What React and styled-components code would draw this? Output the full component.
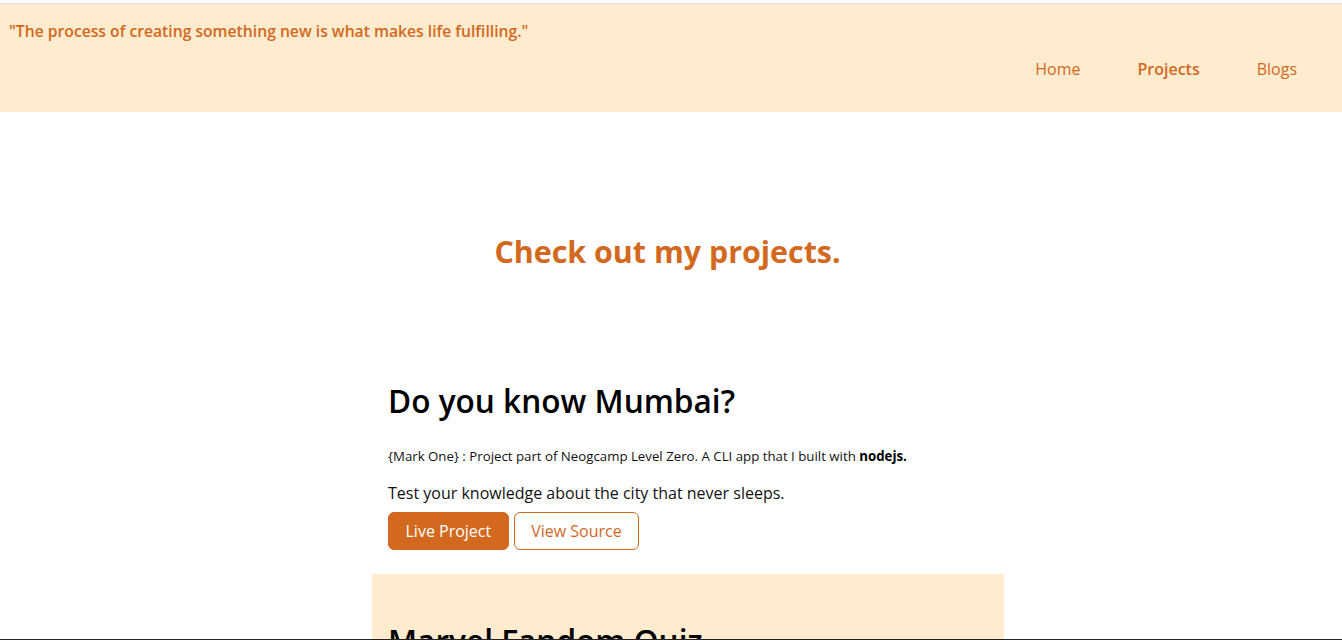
import React from "react";
import styled, { createGlobalStyle } from "styled-components";

const Global = createGlobalStyle`
  html, body { margin: 0; padding: 0; background: #fff; }
  body {
    font-family: "Open Sans", "Noto Sans", sans-serif;
    color: #000;
    border-top: 3px solid #fff;
  }
  * { box-sizing: border-box; }
`;

const accent = "#d2691e";
const cream = "#ffebcd";

const Header = styled.header`
  background: ${cream};
  border-top: 1px solid #d9d9d9;
  padding: 15px 0 31px;
  display: flex;
  flex-direction: column;
`;

const Quote = styled.p`
  margin: 0;
  padding-left: 9px;
  font-size: 15.7px;
  line-height: 24px;
  font-weight: 600;
  color: ${accent};
`;

const Nav = styled.nav`
  margin-top: 14px;
  display: flex;
  justify-content: flex-end;
  gap: 57px;
  padding-right: 45px;
`;

const NavLink = styled.a`
  font-size: 16px;
  line-height: 24px;
  color: ${accent};
  text-decoration: none;
  font-weight: ${(p) => (p.$active ? 600 : 400)};
`;

const Main = styled.main`
  padding-top: 116px;
`;

const PageTitle = styled.h1`
  margin: 0 0 58px;
  padding-right: 7px;
  text-align: center;
  font-size: 30.4px;
  line-height: 48px;
  font-weight: 700;
  color: ${accent};
`;

const List = styled.div`
  width: 666px;
  margin: 0 auto;
  padding-left: 34px;
  display: flex;
  flex-direction: column;
`;

const Card = styled.article`
  background: ${(p) => (p.$alt ? cream : "#fff")};
  padding: 43px 16px 24px;
`;

const CardTitle = styled.h2`
  margin: 0 0 22px;
  font-size: 31.6px;
  line-height: 48px;
  font-weight: 600;
  color: #000;
`;

const Note = styled.p`
  margin: 0 0 16px;
  font-size: 13.25px;
  line-height: 18px;
  color: #111;
  b { font-weight: 700; color: #000; }
`;

const Desc = styled.p`
  margin: 0 0 7px;
  font-size: 16px;
  line-height: 24px;
  color: #111;
`;

const Buttons = styled.div`
  display: flex;
  gap: 5px;
`;

const Button = styled.a`
  display: inline-block;
  font-size: 16px;
  line-height: 22px;
  padding: 7px 16.5px;
  border: 1px solid ${accent};
  border-radius: 6px;
  text-decoration: none;
  background: ${(p) => (p.$primary ? accent : "#fff")};
  color: ${(p) => (p.$primary ? "#fff" : accent)};
`;

const BottomEdge = styled.div`
  position: fixed;
  left: 0;
  right: 0;
  bottom: 0;
  height: 1px;
  background: #222;
`;

const projects = [
  {
    title: "Do you know Mumbai?",
    note: "{Mark One} : Project part of Neogcamp Level Zero. A CLI app that I built with",
    tech: "nodejs.",
    desc: "Test your knowledge about the city that never sleeps.",
  },
  {
    title: "Marvel Fandom Quiz",
    note: "{Mark Two} : Project part of Neogcamp Level Zero. A CLI app that I built with",
    tech: "nodejs.",
    desc: "How well do you know the Marvel Cinematic Universe?",
  },
];

export default function App() {
  return (
    <>
      <Global />
      <Header>
        <Quote>"The process of creating something new is what makes life fulfilling."</Quote>
        <Nav>
          <NavLink href="#">Home</NavLink>
          <NavLink href="#" $active>Projects</NavLink>
          <NavLink href="#">Blogs</NavLink>
        </Nav>
      </Header>
      <Main>
        <PageTitle>Check out my projects.</PageTitle>
        <List>
          {projects.map((p, i) => (
            <Card key={p.title} $alt={i % 2 === 1}>
              <CardTitle>{p.title}</CardTitle>
              <Note>
                {p.note} <b>{p.tech}</b>
              </Note>
              <Desc>{p.desc}</Desc>
              <Buttons>
                <Button href="#" $primary>Live Project</Button>
                <Button href="#">View Source</Button>
              </Buttons>
            </Card>
          ))}
        </List>
      </Main>
      <BottomEdge />
    </>
  );
}
